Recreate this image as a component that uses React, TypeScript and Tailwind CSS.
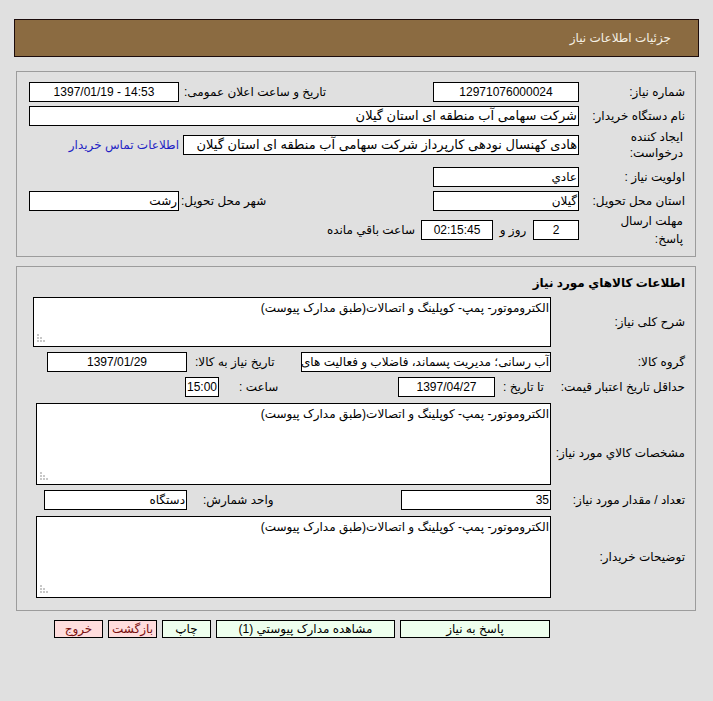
import React from "react";

const DESC = "الکتروموتور- پمپ- کوپلینگ و اتصالات(طبق مدارک پیوست)";

const Field = ({
  w,
  children,
  center,
  ltr,
  wide,
}: {
  w: string;
  children?: React.ReactNode;
  center?: boolean;
  ltr?: boolean;
  wide?: boolean;
}) => (
  <div
    dir={ltr ? "ltr" : undefined}
    className={`${w} h-[20px] shrink-0 overflow-hidden whitespace-nowrap border border-black bg-white px-[1px] leading-[18px] ${
      center ? "text-center" : "text-right"
    } ${wide ? "text-[13px]" : ""}`}
  >
    {children}
  </div>
);

const Grip = () => (
  <svg className="absolute bottom-[3px] left-[3px]" width="9" height="9" viewBox="0 0 9 9">
    {[
      [1, 1],
      [1, 4],
      [4, 4],
      [1, 7],
      [4, 7],
      [7, 7],
    ].map(([x, y], i) => (
      <rect key={i} x={x - 1} y={y - 1} width="2" height="2" fill="#c8c8c8" />
    ))}
  </svg>
);

const Area = ({ w, h }: { w: string; h: string }) => (
  <div className={`relative ${w} ${h} shrink-0 border border-black bg-white pr-[1px] pt-[2px] leading-[16px]`}>
    {DESC}
    <Grip />
  </div>
);

export default function App() {
  return (
    <div
      dir="rtl"
      className="h-[701px] w-[713px] overflow-hidden bg-[#e0e0e0] pt-[19px] font-['Liberation_Sans','DejaVu_Sans',sans-serif] text-[12px] text-black"
    >
      {/* header */}
      <div className="mr-[14px] flex h-[38px] w-[685px] items-center border border-[#1c0c0c] bg-[#8b6b41] pr-[27px] text-[#f5f0e4]">
        جزئیات اطلاعات نیاز
      </div>

      {/* panel 1 */}
      <div className="mr-[17px] mt-[14px] w-[680px] border border-[#9c9c9c] pb-[10px] pl-[11px] pr-[10px] pt-[10px]">
        <div className="flex h-[20px] items-center">
          <div className="w-[106px] shrink-0">شماره نیاز:</div>
          <Field w="w-[146px]" center>
            12971076000024
          </Field>
          <div className="w-[254px] shrink-0 pl-[5px] text-left">تاریخ و ساعت اعلان عمومی:</div>
          <Field w="w-[150px]" center ltr>
            1397/01/19 - 14:53
          </Field>
        </div>

        <div className="mt-[4px] flex h-[20px] items-center">
          <div className="w-[106px] shrink-0">نام دستگاه خریدار:</div>
          <Field w="w-[550px]" wide>
            شرکت سهامی آب منطقه ای استان گیلان
          </Field>
        </div>

        <div className="mt-[3px] flex h-[32px] items-center">
          <div className="w-[106px] shrink-0 pr-[2px] leading-[16px]">
            ایجاد کننده
            <br />
            درخواست:
          </div>
          <Field w="w-[396px]" wide>
            هادی کهنسال نودهی کارپرداز شرکت سهامی آب منطقه ای استان گیلان
          </Field>
          <div className="w-[154px] shrink-0 pr-[4px] text-[#1f1fc4]">اطلاعات تماس خریدار</div>
        </div>

        <div className="mt-[6px] flex h-[20px] items-center">
          <div className="w-[106px] shrink-0">اولویت نیاز :</div>
          <Field w="w-[146px]">عادي</Field>
        </div>

        <div className="mt-[4px] flex h-[20px] items-center">
          <div className="w-[106px] shrink-0">استان محل تحویل:</div>
          <Field w="w-[146px]">گیلان</Field>
          <div className="w-[254px] shrink-0 pl-[2px] text-left">شهر محل تحویل:</div>
          <Field w="w-[150px]">رشت</Field>
        </div>

        <div className="mt-[3px] flex h-[32px] items-center">
          <div className="w-[106px] shrink-0 pr-[2px] leading-[18px]">
            مهلت ارسال
            <br />
            پاسخ:
          </div>
          <Field w="w-[46px]" center>
            2
          </Field>
          <div className="w-[40px] shrink-0 text-center">روز و</div>
          <Field w="w-[72px]" center>
            02:15:45
          </Field>
          <div className="shrink-0 pr-[6px]">ساعت باقي مانده</div>
        </div>
      </div>

      {/* panel 2 */}
      <div className="mr-[17px] mt-[9px] w-[680px] border border-[#9c9c9c] pb-[12px] pl-[11px] pr-[10px] pt-[8px]">
        <div className="h-[16px] font-bold leading-[16px]">اطلاعات كالاهاي مورد نياز</div>

        <div className="mt-[6px] flex items-center">
          <div className="w-[134px] shrink-0">شرح کلی نیاز:</div>
          <Area w="w-[518px]" h="h-[50px]" />
        </div>

        <div className="mt-[5px] flex h-[20px] items-center">
          <div className="w-[134px] shrink-0">گروه کالا:</div>
          <Field w="w-[250px]">آب رسانی؛ مدیریت پسماند، فاضلاب و فعالیت های</Field>
          <div className="w-[114px] shrink-0 pl-[8px] text-left">تاریخ نیاز به کالا:</div>
          <Field w="w-[140px]" center>
            1397/01/29
          </Field>
        </div>

        <div className="mt-[5px] flex h-[20px] items-center">
          <div className="w-[134px] shrink-0 whitespace-nowrap">حداقل تاریخ اعتبار قیمت:</div>
          <div className="w-[56px] shrink-0 whitespace-nowrap pl-[8px] text-left">تا تاریخ :</div>
          <Field w="w-[97px]" center>
            1397/04/27
          </Field>
          <div className="w-[179px] shrink-0 pl-[20px] text-left">ساعت :</div>
          <Field w="w-[34px]" center>
            15:00
          </Field>
        </div>

        <div className="mt-[6px] flex items-center">
          <div className="w-[134px] shrink-0 pt-[18px]">مشخصات كالاي مورد نياز:</div>
          <Area w="w-[515px]" h="h-[82px]" />
        </div>

        <div className="mt-[5px] flex h-[20px] items-center">
          <div className="w-[134px] shrink-0">تعداد / مقدار مورد نیاز:</div>
          <Field w="w-[150px]">35</Field>
          <div className="w-[214px] shrink-0 pl-[16px] text-left">واحد شمارش:</div>
          <Field w="w-[143px]">دستگاه</Field>
        </div>

        <div className="mt-[6px] flex items-center">
          <div className="w-[134px] shrink-0">توضیحات خریدار:</div>
          <Area w="w-[515px]" h="h-[82px]" />
        </div>
      </div>

      {/* buttons */}
      <div className="mt-[9px] flex gap-[5px] pr-[163px]">
        <div className="h-[18px] w-[150px] border border-black bg-[#eeffee] text-center leading-[16px]">پاسخ به نیاز</div>
        <div className="h-[18px] w-[179px] border border-black bg-[#eeffee] text-center leading-[16px]">مشاهده مدارک پیوستي (1)</div>
        <div className="h-[18px] w-[49px] border border-black bg-[#eeffee] text-center leading-[16px]">چاپ</div>
        <div className="h-[18px] w-[49px] whitespace-nowrap border border-black bg-[#ffdddd] text-center leading-[16px] text-[#7a1010]">بازگشت</div>
        <div className="h-[18px] w-[49px] border border-black bg-[#ffdddd] text-center leading-[16px] text-[#7a1010]">خروج</div>
      </div>
    </div>
  );
}
